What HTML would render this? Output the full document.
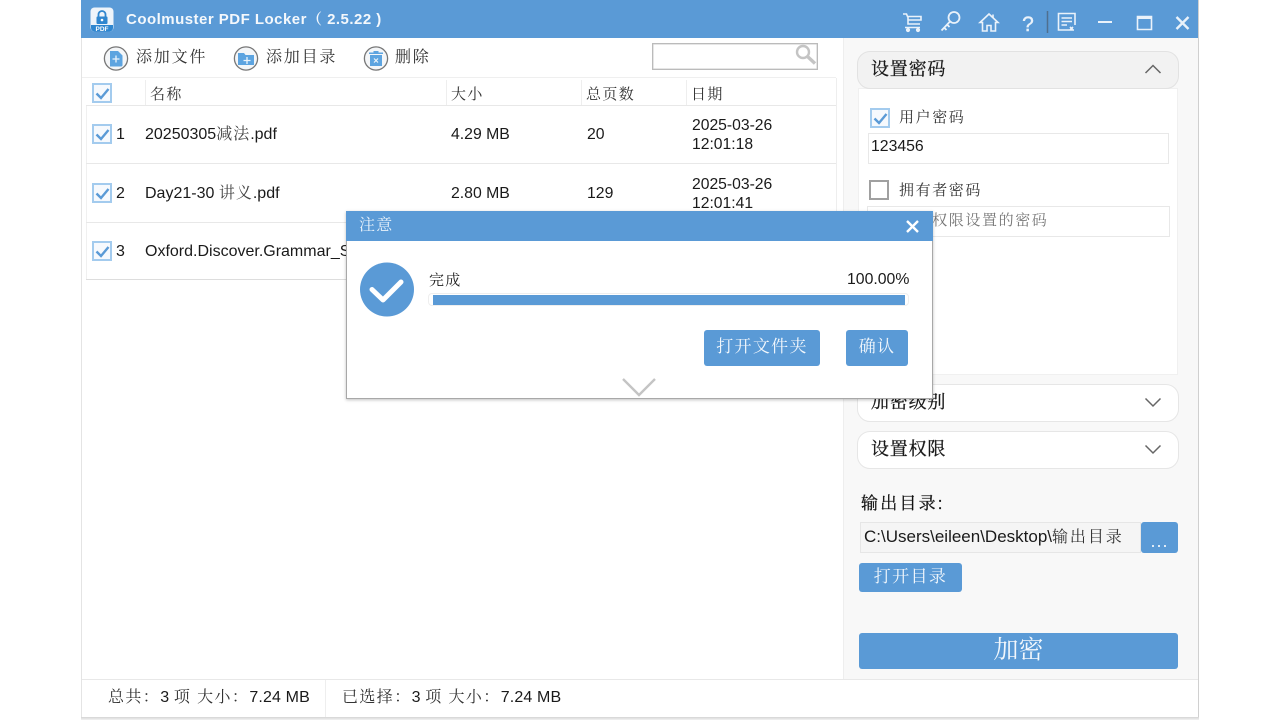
<!DOCTYPE html>
<html><head><meta charset="utf-8"><style>
html,body{margin:0;padding:0;width:1280px;height:720px;overflow:hidden;background:#fff}
body{font-family:"Liberation Sans","Noto Serif CJK SC",serif;font-size:16px;color:#1a1a1a;position:relative}
.a{position:absolute;white-space:nowrap}
.m{line-height:18px}
.z{letter-spacing:1.4px;color:#333}
.b{-webkit-text-stroke:.25px #111}
.cb{position:absolute;width:16px;height:16px;border:2px solid #a3cbee;background:#f6f9fd;box-sizing:content-box}
.cb svg{position:absolute;left:-1px;top:-1px}
.hl{position:absolute;background:#e8e8e8;height:1px}
.btn{position:absolute;background:#5a9ad6;border-radius:3px;color:#f2f7fc;text-align:center}
.pan{position:absolute;left:857px;width:320px;border:1px solid #e6e6e6;border-radius:13px;background:#fff;box-sizing:content-box}
</style></head><body>
<svg width="0" height="0" style="position:absolute"><defs><path id="ck" d="M3.500 9.500L8 14L15.500 5" fill="none" stroke="#5a9ad6" stroke-width="2.400"/></defs></svg>

<!-- window edges -->
<div class="a" style="left:81px;top:38px;width:1px;height:680px;background:#e4e4e4"></div>
<div class="a" style="left:1198px;top:0;width:1px;height:718px;background:#d0d0d0"></div>
<div class="a" style="left:81px;top:717px;width:1118px;height:3px;background:linear-gradient(#d4d4d4,#f2f2f2)"></div>

<!-- title bar -->
<div class="a" style="left:81px;top:0;width:1117px;height:38px;background:#5a9ad6"></div>
<svg class="a" style="left:90px;top:7px" width="24" height="25" viewBox="0 0 24 25">
<rect x="0.500" y="0.500" width="23" height="24" rx="4" fill="#eef4fa"/>
<path d="M1 18h22v3a3.500 3.500 0 0 1-3.500 3.500h-15A3.500 3.500 0 0 1 1 21z" fill="#2f86cf"/>
<path d="M8.500 10V7.500a3.500 3.500 0 0 1 7 0V10" fill="none" stroke="#2f86cf" stroke-width="1.800"/>
<rect x="6.500" y="9.500" width="11" height="7.500" rx="1" fill="#2f86cf"/>
<circle cx="12" cy="13" r="1.300" fill="#fff"/>
<text x="12" y="24" font-size="6.500" font-weight="700" fill="#fff" text-anchor="middle" font-family="Liberation Sans">PDF</text>
</svg>
<div class="a" style="left:126px;top:8px;font-size:15px;font-weight:700;color:#f4f8fc;letter-spacing:.48px">Coolmuster PDF Locker（ 2.5.22 )</div>

<!-- title icons -->
<svg class="a" style="left:900px;top:10px" width="290" height="26" viewBox="0 0 290 26" fill="none" stroke="#eaf2fa" stroke-width="1.600">
<path d="M3 4h3.500l1 2.500H21v3.500H8M8 6.500V14H20M5 17.500H20" />
<circle cx="8" cy="20" r="1.300" fill="#eaf2fa"/><circle cx="18" cy="20" r="1.300" fill="#eaf2fa"/>
<circle cx="54" cy="7.500" r="5.500" stroke-width="1.800"/><path d="M50 11.500L41.500 20.500M44 17.500l2.500 2.500M47 14.500l2.500 2.500" stroke-width="1.800"/>
<path d="M89 4L80 12.500H82.500V21H87V15.500H91V21H95.500V12.500H98L89 4Z"/><path d="M93 4.500V7.500" />
<text x="128" y="21" font-size="21" fill="#eaf2fa" stroke="#eaf2fa" stroke-width=".4" text-anchor="middle" font-family="Liberation Sans">?</text>
<path d="M147.500 1V23" stroke="#4f6f8f" stroke-width="1.500"/>
<path d="M174 20H158.500V3.500H175V15M161.500 8H172M161.500 11.500H172M161.500 15H167M170 17l2.500 2.500M170 20l3-3"/>
<path d="M198 12H212" stroke-width="2"/>
<path d="M237.500 6.500H251.500V19.500H237.500Z"/><path d="M237.500 7.500H251.500" stroke-width="3"/>
<path d="M276.500 7L288.500 19M288.500 7L276.500 19" stroke-width="2.400"/>
</svg>

<!-- toolbar -->
<svg class="a" style="left:103px;top:45px" width="26" height="26" viewBox="0 0 26 26">
<circle cx="13" cy="13.500" r="11.600" fill="#f4f6f8" stroke="#777" stroke-width="1.300"/>
<path d="M7 6h8l4.500 4.500V20a1.500 1.500 0 0 1-1.500 1.500H7z" fill="#5da4e0"/>
<path d="M13 10.500v7M9.500 14h7" stroke="#eaf3fb" stroke-width="1.300"/></svg>
<div class="a z" style="left:136px;top:44px;font-size:16px;letter-spacing:1.800px">添加文件</div>
<svg class="a" style="left:233px;top:45px" width="26" height="26" viewBox="0 0 26 26">
<circle cx="13" cy="13.500" r="11.600" fill="#f4f6f8" stroke="#777" stroke-width="1.300"/>
<path d="M5 8h6l1.500 2H21v10H5z" fill="#5da4e0"/>
<path d="M14 12v7M10.500 15.500h7" stroke="#eaf3fb" stroke-width="1.300"/></svg>
<div class="a z" style="left:266px;top:44px;font-size:16px;letter-spacing:1.800px">添加目录</div>
<svg class="a" style="left:363px;top:45px" width="26" height="26" viewBox="0 0 26 26">
<circle cx="13" cy="13.500" r="11.600" fill="#f4f6f8" stroke="#777" stroke-width="1.300"/>
<path d="M7 10h12v11H7z" fill="#5da4e0"/><path d="M6 7.500h14v1.500H6zM10.500 6h5v1.500h-5z" fill="#5da4e0"/>
<path d="M11 13.500l4 4M15 13.500l-4 4" stroke="#eaf3fb" stroke-width="1.200"/></svg>
<div class="a z" style="left:395px;top:44px;font-size:16px;letter-spacing:1.800px">删除</div>

<div class="a" style="left:652px;top:43px;width:164px;height:25px;border:1px solid #bbb;box-shadow:inset 0 0 0 .5px #ccc;background:#fff"></div>
<svg class="a" style="left:793px;top:43px" width="24" height="24" viewBox="0 0 24 24" fill="none" stroke="#c4c4c4">
<circle cx="10" cy="9" r="6" stroke-width="2.400"/><path d="M14.500 13.500L22 20.500" stroke-width="3.400"/></svg>

<!-- table header -->
<div class="hl" style="left:82px;top:77px;width:754px;background:#efefef"></div>
<div class="cb" style="left:92px;top:83px"><svg width="18" height="18"><use href="#ck"/></svg></div>
<div class="a" style="left:145px;top:80px;width:1px;height:25px;background:#eee"></div>
<div class="a" style="left:446px;top:80px;width:1px;height:25px;background:#eee"></div>
<div class="a" style="left:581px;top:80px;width:1px;height:25px;background:#eee"></div>
<div class="a" style="left:686px;top:80px;width:1px;height:25px;background:#eee"></div>
<div class="a z" style="left:150px;top:83px;font-size:15px">名称</div>
<div class="a z" style="left:451px;top:83px;font-size:15px">大小</div>
<div class="a z" style="left:586px;top:83px;font-size:15px">总页数</div>
<div class="a z" style="left:691px;top:83px;font-size:15px">日期</div>
<div class="hl" style="left:86px;top:105px;width:750px"></div>
<div class="a" style="left:836px;top:78px;width:1px;height:133px;background:#eee"></div>
<div class="a" style="left:86px;top:106px;width:1px;height:174px;background:#f0f0f0"></div>

<!-- rows -->
<div class="cb" style="left:92px;top:124px"><svg width="18" height="18"><use href="#ck"/></svg></div>
<div class="a m" style="left:116px;top:126px">1</div>
<div class="a m" style="left:145px;top:126px">20250305<span style="letter-spacing:1px;color:#444">减法</span>.pdf</div>
<div class="a m" style="left:451px;top:126px;font-size:15.800px">4.29 MB</div>
<div class="a m" style="left:587px;top:126px;font-size:15.800px">20</div>
<div class="a" style="left:692px;top:116px;line-height:19px;font-size:15.700px">2025-03-26<br>12:01:18</div>
<div class="hl" style="left:86px;top:163px;width:750px"></div>

<div class="cb" style="left:92px;top:183px"><svg width="18" height="18"><use href="#ck"/></svg></div>
<div class="a m" style="left:116px;top:185px">2</div>
<div class="a m" style="left:145px;top:185px">Day21-30 <span style="letter-spacing:1px;color:#444">讲义</span>.pdf</div>
<div class="a m" style="left:451px;top:185px;font-size:15.800px">2.80 MB</div>
<div class="a m" style="left:587px;top:185px;font-size:15.800px">129</div>
<div class="a" style="left:692px;top:175px;line-height:19px;font-size:15.700px">2025-03-26<br>12:01:41</div>
<div class="hl" style="left:86px;top:222px;width:750px"></div>

<div class="cb" style="left:92px;top:241px"><svg width="18" height="18"><use href="#ck"/></svg></div>
<div class="a m" style="left:116px;top:243px">3</div>
<div class="a m" style="left:145px;top:243px">Oxford.Discover.Grammar_S</div>
<div class="a" style="left:86px;top:279px;width:262px;height:1px;background:#ddd"></div>

<!-- right panel -->
<div class="a" style="left:843px;top:38px;width:355px;height:641px;background:#f8f8f8;border-left:1px solid #eee;box-sizing:border-box"></div>
<div class="a" style="left:858px;top:88px;width:320px;height:287px;background:#fff;border:1px solid #f0f0f0;box-sizing:border-box"></div>
<div class="pan" style="top:51px;height:36px;background:#f2f2f2;border-color:#e2e2e2"></div>
<div class="a b" style="left:871px;top:55px;font-size:18px;letter-spacing:.8px;color:#1a1a1a">设置密码</div>
<svg class="a" style="left:1143px;top:61px" width="20" height="14" fill="none" stroke="#666" stroke-width="1.500"><path d="M2.500 12L10 4.500L17.500 12"/></svg>

<div class="cb" style="left:870px;top:108px"><svg width="18" height="18"><use href="#ck"/></svg></div>
<div class="a z" style="left:899px;top:106px;font-size:15px;letter-spacing:1.600px">用户密码</div>
<div class="a" style="left:868px;top:133px;width:301px;height:31px;border:1px solid #e8e8e8;box-sizing:border-box;background:#fff"></div>
<div class="a m" style="left:871px;top:138px;font-size:15.800px">123456</div>
<div class="a" style="left:869px;top:180px;width:16px;height:16px;border:2px solid #a0a0a0;background:#fff"></div>
<div class="a z" style="left:899px;top:179px;font-size:15px;letter-spacing:1.600px">拥有者密码</div>
<div class="a" style="left:867px;top:206px;width:303px;height:31px;border:1px solid #e8e8e8;box-sizing:border-box;background:#fff"></div>
<div class="a z" style="left:899px;top:209px;font-size:15px;letter-spacing:1.600px;color:#777">输入权限设置的密码</div>

<div class="pan" style="top:384px;height:36px"></div>
<div class="a b" style="left:871px;top:388px;font-size:18px;letter-spacing:.8px;color:#1a1a1a">加密级别</div>
<svg class="a" style="left:1143px;top:396px" width="20" height="14" fill="none" stroke="#666" stroke-width="1.500"><path d="M2.500 2.500L10 10L17.500 2.500"/></svg>
<div class="pan" style="top:431px;height:36px"></div>
<div class="a b" style="left:871px;top:435px;font-size:18px;letter-spacing:.8px;color:#1a1a1a">设置权限</div>
<svg class="a" style="left:1143px;top:443px" width="20" height="14" fill="none" stroke="#666" stroke-width="1.500"><path d="M2.500 2.500L10 10L17.500 2.500"/></svg>

<div class="a b" style="left:861px;top:489px;font-size:17px;letter-spacing:2.200px;color:#111">输出目录:</div>
<div class="a" style="left:860px;top:522px;width:281px;height:31px;background:#f5f5f5;border:1px solid #e6e6e6;box-sizing:border-box"></div>
<div class="a m" style="left:864px;top:528px;font-size:17px">C:\Users\eileen\Desktop\<span style="font-size:16px;letter-spacing:1.900px;color:#333">输出目录</span></div>
<div class="btn" style="left:1141px;top:522px;width:37px;height:31px;font-size:18px;line-height:38px;letter-spacing:1px">...</div>
<div class="btn" style="left:859px;top:563px;width:103px;height:29px;font-size:17px;line-height:28px;letter-spacing:1.400px">打开目录</div>
<div class="btn" style="left:859px;top:633px;width:319px;height:36px;font-size:25px;line-height:34px">加密</div>

<!-- status bar -->
<div class="hl" style="left:82px;top:679px;width:1116px"></div>
<div class="a" style="left:325px;top:680px;width:1px;height:37px;background:#eee"></div>
<div class="a m" style="left:108px;top:689px;font-size:16px;letter-spacing:.15px"><span class="z">总共：</span>3 <span class="z">项 大小：</span>7.24 MB</div>
<div class="a m" style="left:342px;top:689px;font-size:16px;letter-spacing:.15px"><span class="z">已选择：</span>3 <span class="z">项 大小：</span>7.24 MB</div>

<!-- dialog -->
<div class="a" style="left:346px;top:211px;width:587px;height:188px;background:#fff;border:1px solid #a8a8a8;border-top:none;box-sizing:border-box;box-shadow:0 1px 3px rgba(0,0,0,.25)"></div>
<div class="a" style="left:346px;top:211px;width:587px;height:30px;background:#5a9ad6"></div>
<div class="a" style="left:359px;top:212px;font-size:16px;letter-spacing:1.300px;color:#e8f1fa">注意</div>
<svg class="a" style="left:904px;top:218px" width="17" height="17" fill="none" stroke="#fff" stroke-width="2.400"><path d="M3 3L14 14M14 3L3 14"/></svg>
<svg class="a" style="left:360px;top:262px" width="54" height="55" viewBox="0 0 54 55">
<circle cx="27" cy="27.500" r="27" fill="#5a9ad6"/>
<path d="M12 27.500L23 38L41 20" fill="none" stroke="#fff" stroke-width="5" stroke-linecap="round" stroke-linejoin="round"/></svg>
<div class="a z" style="left:429px;top:269px;font-size:15px;letter-spacing:1.300px;color:#222">完成</div>
<div class="a" style="left:847px;top:271px;font-size:15.800px;color:#1a1a1a">100.00%</div>
<div class="a" style="left:428px;top:293px;width:481px;height:13px;border:1px solid #eee;border-radius:4px;box-sizing:border-box;background:#fff"></div>
<div class="a" style="left:433px;top:295px;width:472px;height:10px;background:#5a9ad6"></div>
<div class="btn" style="left:704px;top:330px;width:116px;height:36px;font-size:17px;line-height:33px;letter-spacing:1.300px">打开文件夹</div>
<div class="btn" style="left:846px;top:330px;width:62px;height:36px;font-size:17px;line-height:33px;letter-spacing:1.300px">确认</div>
<svg class="a" style="left:621px;top:377px" width="36" height="21" fill="none" stroke="#c4c4c4" stroke-width="2.400"><path d="M2 2L18 18L34 2"/></svg>
</body></html>
